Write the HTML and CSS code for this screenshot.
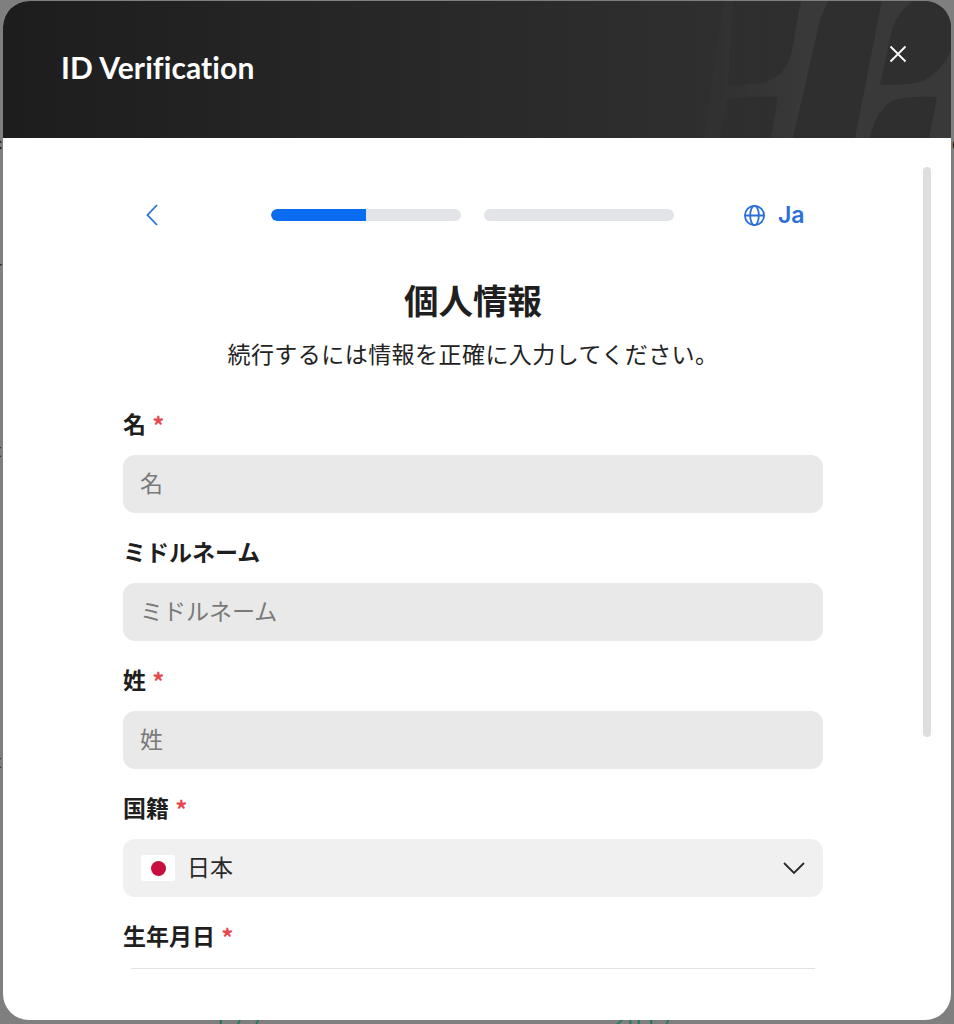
FILE: index.html
```html
<!DOCTYPE html>
<html lang="ja">
<head>
<meta charset="utf-8">
<title>ID Verification</title>
<link rel="stylesheet" href="styles.css">
</head>
<body>
<div class="backdrop-bits" aria-hidden="true">
  <span class="bit bit-a">c</span>
  <span class="bit bit-b">r</span>
  <span class="bit bit-c">t</span>
  <span class="bit bit-d">t</span>
  <span class="bit bit-e">c</span>
  <span class="bit bit-f">177</span>
  <span class="bit bit-g">2017</span>
</div>
<main class="modal">
  <header class="modal-head">
    <svg class="head-art" viewBox="700 0 254 138" aria-hidden="true">
      <path class="art-light" d="M724 0 H954 V138 H700 Z"/>
      <path class="art-dark" d="M733 0 H801 L791 55 Q785 76 765 82 Q750 85 728 85 Z"/>
      <path class="art-dark" d="M830 0 H882 L855 138 H793 L816 38 Q821 10 830 0 Z"/>
      <path class="art-dark" d="M892 30 Q898 10 915 0 H954 V42 Q946 68 925 80 Q915 85 880 85 Z"/>
      <path class="art-dark" d="M870 138 Q875 112 892 101 Q905 96 937 97 L929 138 Z"/>
      <path class="art-dark" d="M720 138 L727 100 Q745 96 778 97 L771 138 Z"/>
      <path class="art-dark" d="M700 0 H724 L704 138 H700 Z"/>
    </svg>
    <h1 class="head-title">ID Verification</h1>
    <button class="close" aria-label="close">
      <svg viewBox="0 0 18 18" width="18" height="18"><path d="M1.500 1.500 L16.500 16.500 M16.500 1.500 L1.500 16.500" stroke="#fff" stroke-width="1.800" fill="none"/></svg>
    </button>
  </header>
  <div class="modal-body">
    <div class="scrollbar"></div>
    <div class="content">
      <div class="topbar">
        <svg class="back" viewBox="0 0 14 24" width="14" height="24"><path d="M12 2 L2.500 12 L12 22" stroke="#2b6fd8" stroke-width="1.800" fill="none"/></svg>
        <div class="steps">
          <div class="step"><div class="step-fill"></div></div>
          <div class="step"></div>
        </div>
        <div class="lang">
          <svg viewBox="0 0 24 24" width="23" height="23" fill="none" stroke="#2b6fd8" stroke-width="1.900"><circle cx="12" cy="12" r="10"/><ellipse cx="12" cy="12" rx="4.500" ry="10"/><path d="M2 12 H22"/></svg>
          <span>Ja</span>
        </div>
      </div>
      <h2 class="title">個人情報</h2>
      <p class="subtitle">続行するには情報を正確に入力してください。</p>
      <form class="form">
        <div class="field">
          <div class="label">名 <em>*</em></div>
          <div class="input">名</div>
        </div>
        <div class="field">
          <div class="label">ミドルネーム</div>
          <div class="input">ミドルネーム</div>
        </div>
        <div class="field">
          <div class="label">姓 <em>*</em></div>
          <div class="input">姓</div>
        </div>
        <div class="field">
          <div class="label">国籍 <em>*</em></div>
          <div class="select">
            <span class="flag"><i></i></span>
            <span class="select-text">日本</span>
            <svg class="chev" viewBox="0 0 24 14" width="24" height="14"><path d="M2 2 L12 12 L22 2" stroke="#2a2a2a" stroke-width="1.800" fill="none"/></svg>
          </div>
        </div>
        <div class="field">
          <div class="label">生年月日 <em>*</em></div>
          <div class="rule"></div>
        </div>
      </form>
    </div>
  </div>
</main>
</body>
</html>
```
FILE: styles.css
```css
* { box-sizing: border-box; }
html, body { margin: 0; height: 100%; }
body {
  width: 954px;
  height: 1024px;
  background: #7f7f7f;
  overflow: hidden;
  position: relative;
  padding: 1px 3px 4px;
  font-family: "Noto Sans CJK JP", "Noto Sans", sans-serif;
  color: #1f1f1f;
}
.backdrop-bits { position: absolute; inset: 0; overflow: hidden; }
.bit { position: absolute; font-size: 18px; line-height: 20px; color: #222; font-family: "Liberation Sans", sans-serif; }
.bit-a { left: -7px; top: 134px; }
.bit-b { left: -4px; top: 258px; }
.bit-c { left: -4px; top: 441px; }
.bit-d { left: -4px; top: 752px; }
.bit-e { right: -7px; top: 134px; }
.bit-f { left: 214px; top: 1012px; color: #1f7a5c; letter-spacing: 6px; font-size: 22px; }
.bit-g { left: 612px; top: 1012px; color: #1f7a5c; letter-spacing: 4px; font-size: 22px; }
.modal {
  position: relative;
  width: 948px;
  height: 1019px;
  border-radius: 26px;
  overflow: hidden;
  background: #fff;
  display: flex;
  flex-direction: column;
}
.modal-head {
  position: relative;
  height: 137px;
  flex: none;
  background: linear-gradient(90deg, #1d1d1d 0%, #262626 35%, #2f2f2f 75%, #2f2f2f 100%);
  display: flex;
  align-items: center;
  justify-content: space-between;
  padding: 0 44px 5px 58px;
  overflow: hidden;
}
.head-art {
  position: absolute;
  right: -3px;
  top: -1px;
  width: 254px;
  height: 138px;
  mask-image: linear-gradient(90deg, rgba(0,0,0,.25) 8%, #000 40%);
}
.art-light { fill: #393939; }
.art-dark { fill: #2f2f2f; }
.head-title {
  position: relative;
  margin: 0;
  font-family: "Lato", sans-serif;
  font-weight: 700;
  font-size: 30px;
  line-height: 36px;
  font-variant-ligatures: none;
  letter-spacing: 0.1px;
  color: #fff;
}
.close {
  position: relative;
  top: -13px;
  padding: 0;
  border: 0;
  background: none;
  display: flex;
}
.modal-body { position: relative; flex: 1; min-height: 0; }
.scrollbar {
  position: absolute;
  right: 20px;
  top: 29px;
  width: 8px;
  height: 570px;
  border-radius: 4px;
  background: #dedede;
}
.content { padding: 65px 128px 0 120px; }
.topbar {
  display: flex;
  align-items: center;
  height: 24px;
  padding-left: 22px;
}
.back { flex: none; }
.steps {
  display: flex;
  gap: 23px;
  margin-left: 112px;
  width: 403px;
  flex: none;
}
.step {
  flex: 1;
  height: 12px;
  border-radius: 6px;
  background: #e2e4e7;
  overflow: hidden;
}
.step-fill { width: 50%; height: 100%; border-radius: 6px 0 0 6px; background: #0a6cf0; }
.lang {
  display: flex;
  align-items: center;
  gap: 12px;
  margin-left: 69px;
  color: #2b6fd8;
  font-family: "Inter", sans-serif;
  font-weight: 600;
  font-size: 23px;
}
.title {
  margin: 48px 0 0;
  text-align: center;
  font-size: 34.500px;
  line-height: 48px;
  font-weight: 700;
  color: #1f1f1f;
}
.subtitle {
  margin: 14px 0 0;
  text-align: center;
  font-size: 23px;
  letter-spacing: 0.450px;
  line-height: 32px;
  color: #222;
}
.form {
  display: flex;
  flex-direction: column;
  gap: 23px;
  margin-top: 39px;
}
.field { display: flex; flex-direction: column; gap: 16px; }
.label {
  font-size: 23px;
  line-height: 31px;
  font-weight: 700;
  color: #1f1f1f;
}
.label em {
  font-style: normal;
  font-size: 24px;
  line-height: 1;
  vertical-align: -2px;
  color: #e5484d;
  margin-left: 1px;
}
.input {
  height: 58px;
  border-radius: 12px;
  background: #e9e9e9;
  padding: 0 18px 4px 17px;
  display: flex;
  align-items: center;
  font-size: 23px;
  color: #7a7a7a;
}
.select {
  height: 58px;
  border-radius: 12px;
  background: #f0f0f0;
  padding: 0 17px 0 18px;
  display: flex;
  align-items: center;
  font-size: 23px;
  color: #2a2a2a;
}
.flag {
  width: 34px;
  height: 26px;
  background: #fff;
  display: flex;
  align-items: center;
  justify-content: center;
  border-radius: 2px;
  flex: none;
}
.flag i { width: 15px; height: 15px; border-radius: 50%; background: #c8103e; }
.select-text { margin-left: 12px; flex: 1; padding-bottom: 4px; }
.chev { flex: none; }
.rule { height: 1px; background: #e3e3e3; margin: 1px 8px 0; }
```
